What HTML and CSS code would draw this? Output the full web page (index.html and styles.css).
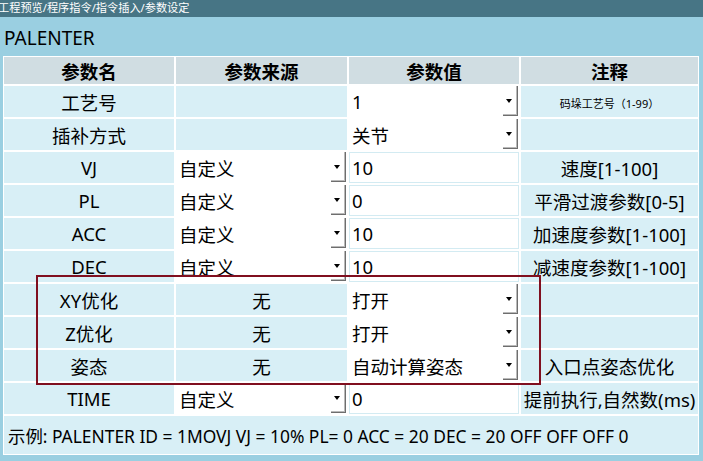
FILE: index.html
```html
<!DOCTYPE html>
<html>
<head>
  <title>参数设定</title>
  <link rel="stylesheet" href="styles.css">
</head>
<body>
  <div class="topbar"><span class="crumbs">工程预览/程序指令/指令插入/参数设定</span></div>
  <div class="title">PALENTER</div>

  <div class="grid">
    <div class="th">参数名</div>
    <div class="th">参数来源</div>
    <div class="th">参数值</div>
    <div class="th">注释</div>

    <div class="cell">工艺号</div>
    <div class="cell"></div>
    <div class="sel"><span class="val">1</span><span class="drop"></span></div>
    <div class="cell small">码垛工艺号（1-99）</div>

    <div class="cell">插补方式</div>
    <div class="cell"></div>
    <div class="sel"><span class="val">关节</span><span class="drop"></span></div>
    <div class="cell"></div>

    <div class="cell">VJ</div>
    <div class="sel"><span class="val">自定义</span><span class="drop"></span></div>
    <div class="inp">10</div>
    <div class="cell">速度[1-100]</div>

    <div class="cell">PL</div>
    <div class="sel"><span class="val">自定义</span><span class="drop"></span></div>
    <div class="inp">0</div>
    <div class="cell">平滑过渡参数[0-5]</div>

    <div class="cell">ACC</div>
    <div class="sel"><span class="val">自定义</span><span class="drop"></span></div>
    <div class="inp">10</div>
    <div class="cell">加速度参数[1-100]</div>

    <div class="cell">DEC</div>
    <div class="sel"><span class="val">自定义</span><span class="drop"></span></div>
    <div class="inp">10</div>
    <div class="cell">减速度参数[1-100]</div>

    <div class="cell">XY优化</div>
    <div class="cell">无</div>
    <div class="sel"><span class="val">打开</span><span class="drop"></span></div>
    <div class="cell"></div>

    <div class="cell">Z优化</div>
    <div class="cell">无</div>
    <div class="sel"><span class="val">打开</span><span class="drop"></span></div>
    <div class="cell"></div>

    <div class="cell">姿态</div>
    <div class="cell">无</div>
    <div class="sel"><span class="val">自动计算姿态</span><span class="drop"></span></div>
    <div class="cell">入口点姿态优化</div>

    <div class="cell">TIME</div>
    <div class="sel"><span class="val">自定义</span><span class="drop"></span></div>
    <div class="inp">0</div>
    <div class="cell">提前执行,自然数(ms)</div>

    <div class="foot">示例: PALENTER ID = 1MOVJ VJ = 10% PL= 0 ACC = 20 DEC = 20 OFF OFF OFF 0</div>
  </div>

  <!-- highlight frame over the optimisation rows -->
  <div class="mark"></div>
</body>
</html>
```

FILE: styles.css
```css
body {
  margin: 0;
  padding: 0;
  width: 703px;
  height: 461px;
  overflow: hidden;
  position: relative;
  background-color: #9acfe1;
  font-family: "Noto Sans", "Noto Sans CJK SC", sans-serif;
  color: #000;
}

.topbar {
  height: 17px;
  background-color: #477585;
  overflow: hidden;
}

.crumbs {
  display: block;
  margin-left: -2px;
  color: #fff;
  font-size: 11.2px;
  line-height: 15px;
  white-space: nowrap;
}

.title {
  height: 39px;
  box-sizing: border-box;
  padding: 9px 0 0 4px;
  font-size: 19px;
  line-height: 25px;
}

.grid {
  display: grid;
  grid-template-columns: 170px 171px 170px 177px;
  grid-template-rows: 27px repeat(10, 31px) 38px;
  gap: 2px;
  width: max-content;
  margin-left: 3px;
  padding: 1px;
  background-color: #fff;
  font-size: 18.5px;
}

.th {
  display: flex;
  align-items: center;
  justify-content: center;
  background-color: #d0dde2;
  font-weight: bold;
}

.cell {
  display: flex;
  align-items: center;
  justify-content: center;
  background-color: #d8eff6;
  white-space: nowrap;
}

.cell.small {
  font-size: 11px;
  padding-top: 2px;
}

.sel {
  display: flex;
  align-items: stretch;
  background-color: #fff;
}

.sel .val {
  flex: 1;
  display: flex;
  align-items: center;
  padding-left: 3px;
  white-space: nowrap;
}

.drop {
  position: relative;
  width: 14px;
  margin: 0 1px 1px 0;
  border-right: 1px solid #6e6e6e;
  border-bottom: 1px solid #6e6e6e;
  box-shadow: inset -1px -1px 0 #b9b9b9;
}

.drop::after {
  content: "";
  position: absolute;
  left: 3px;
  top: 50%;
  margin-top: -2px;
  border-left: 3.5px solid transparent;
  border-right: 3.5px solid transparent;
  border-top: 4px solid #000;
}

.inp {
  display: flex;
  align-items: center;
  padding-left: 2px;
  background-color: #fff;
  border: 1px solid #d3ebf2;
}

.foot {
  grid-column: 1 / -1;
  display: flex;
  align-items: center;
  padding-left: 4px;
  background-color: #d8eff6;
  font-size: 17.4px;
  white-space: nowrap;
}

.mark {
  position: absolute;
  left: 36px;
  top: 275px;
  width: 501px;
  height: 106px;
  border: 2px solid #800f1f;
}
```
